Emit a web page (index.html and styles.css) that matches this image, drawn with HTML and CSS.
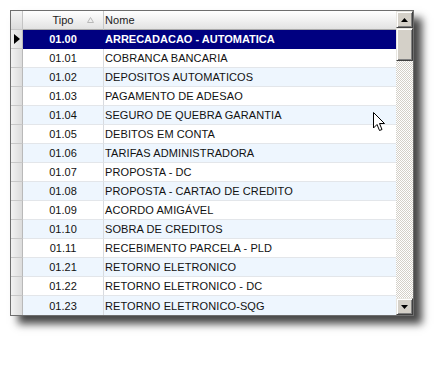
FILE: index.html
```html
<!DOCTYPE html>
<html lang="pt">
<head>
<meta charset="utf-8">
<title>Tipos</title>
<link rel="stylesheet" href="styles.css">
</head>
<body>
<div class="page">
  <div class="grid">
    <div class="table">
      <div class="row head">
        <div class="ind"></div>
        <div class="c-tipo">Tipo<span class="sort"><svg width="7" height="6" viewBox="0 0 7 6"><path d="M3.5 0.5 L6.5 5.5 L0.5 5.5 Z" fill="none" stroke="#b8b8b8" stroke-width="1"/></svg></span></div>
        <div class="c-nome">Nome</div>
      </div>
      <div class="row sel">
        <div class="ind"><svg width="6" height="10" viewBox="0 0 6 10"><path d="M0 0 L6 5 L0 10 Z" fill="#000"/></svg></div>
        <div class="c-tipo">01.00</div><div class="c-nome">ARRECADACAO - AUTOMATICA</div>
      </div>
      <div class="row odd"><div class="ind"></div><div class="c-tipo">01.01</div><div class="c-nome">COBRANCA BANCARIA</div></div>
      <div class="row even"><div class="ind"></div><div class="c-tipo">01.02</div><div class="c-nome">DEPOSITOS AUTOMATICOS</div></div>
      <div class="row odd"><div class="ind"></div><div class="c-tipo">01.03</div><div class="c-nome">PAGAMENTO DE ADESAO</div></div>
      <div class="row even"><div class="ind"></div><div class="c-tipo">01.04</div><div class="c-nome">SEGURO DE QUEBRA GARANTIA</div></div>
      <div class="row odd"><div class="ind"></div><div class="c-tipo">01.05</div><div class="c-nome">DEBITOS EM CONTA</div></div>
      <div class="row even"><div class="ind"></div><div class="c-tipo">01.06</div><div class="c-nome">TARIFAS ADMINISTRADORA</div></div>
      <div class="row odd"><div class="ind"></div><div class="c-tipo">01.07</div><div class="c-nome">PROPOSTA - DC</div></div>
      <div class="row even"><div class="ind"></div><div class="c-tipo">01.08</div><div class="c-nome">PROPOSTA - CARTAO DE CREDITO</div></div>
      <div class="row odd"><div class="ind"></div><div class="c-tipo">01.09</div><div class="c-nome">ACORDO AMIGÁVEL</div></div>
      <div class="row even"><div class="ind"></div><div class="c-tipo">01.10</div><div class="c-nome">SOBRA DE CREDITOS</div></div>
      <div class="row odd"><div class="ind"></div><div class="c-tipo">01.11</div><div class="c-nome">RECEBIMENTO PARCELA - PLD</div></div>
      <div class="row even"><div class="ind"></div><div class="c-tipo">01.21</div><div class="c-nome">RETORNO ELETRONICO</div></div>
      <div class="row odd"><div class="ind"></div><div class="c-tipo">01.22</div><div class="c-nome">RETORNO ELETRONICO - DC</div></div>
      <div class="row even last"><div class="ind"></div><div class="c-tipo">01.23</div><div class="c-nome">RETORNO ELETRONICO-SQG</div></div>
    </div>
    <div class="scrollbar">
      <div class="btn"><svg width="7" height="4" viewBox="0 0 7 4"><path d="M3.5 0 L7 4 L0 4 Z" fill="#000"/></svg></div>
      <div class="thumb"></div>
      <div class="track"></div>
      <div class="btn"><svg width="7" height="4" viewBox="0 0 7 4"><path d="M0 0 L7 0 L3.5 4 Z" fill="#000"/></svg></div>
    </div>
  </div>
  <svg class="cursor" width="13" height="20" viewBox="0 0 13 20"><path d="M0.5 0.5 L0.5 16 L4 12.5 L6.5 18.5 L9 17.5 L6.5 11.5 L11.5 11.5 Z" fill="#fff" stroke="#000" stroke-width="1" stroke-linejoin="miter"/></svg>
</div>
</body>
</html>
```
FILE: styles.css
```css
* { box-sizing: border-box; }
html, body { margin: 0; padding: 0; background: #fff; }
body { font-family: "Liberation Sans", Arial, sans-serif; font-size: 11px; color: #111; }
.page { position: relative; width: 435px; height: 367px; padding: 10px; }
.grid {
  display: flex;
  width: 404px;
  height: 306px;
  border: 1px solid #6e6e6e;
  background: #fff;
  box-shadow: 8px 8px 8px rgba(0,0,0,0.72);
}
.table { flex: 1; display: flex; flex-direction: column; overflow: hidden; }
.row {
  display: grid;
  grid-template-columns: 12px 81px 1fr;
  height: 19px;
  flex: none;
}
.row > div {
  border-bottom: 1px solid #e3e6ea;
  display: flex;
  align-items: center;
  white-space: nowrap;
  overflow: hidden;
}
.ind {
  border-right: 1px solid #b9b9b9;
  background: linear-gradient(to right, #f2f2f2, #dcdcdc);
  justify-content: center;
  border-bottom-color: #c8c8c8 !important;
}
.c-tipo { justify-content: center; border-right: 1px solid #d8dbe0; }
.c-nome { padding-left: 1px; letter-spacing: 0.1px; }
.head > div {
  background: linear-gradient(to bottom, #ffffff 0%, #f1f1f1 50%, #e2e2e2 100%);
  border-bottom: 1px solid #a8a8a8;
  color: #222;
}
.head .ind { background: linear-gradient(to bottom, #f4f4f4, #dcdcdc); border-right-color: #c4c4c4; }
.head .c-tipo { position: relative; border-right: 1px solid #c8c8c8; }
.head .sort { position: absolute; left: 64px; top: 6px; display: flex; }
.odd .c-tipo, .odd .c-nome { background: #fff; }
.even .c-tipo, .even .c-nome { background: #eef6fe; }
.sel .c-tipo, .sel .c-nome { background: #000080; color: #fff; font-weight: bold; border-bottom-color: #000080; border-right-color: #000080; }
.sel .c-nome { letter-spacing: 0; }
.last > div { border-bottom: none; }

.scrollbar {
  width: 17px;
  display: flex;
  flex-direction: column;
  background: repeating-conic-gradient(#d4d0c8 0 25%, #ffffff 0 50%) 0 0 / 2px 2px;
}
.btn, .thumb {
  background: #d4d0c8;
  border: 1px solid;
  border-color: #e8e6e0 #404040 #404040 #e8e6e0;
  box-shadow: inset 1px 1px 0 #ffffff, inset -1px -1px 0 #808080;
  flex: none;
}
.btn { height: 17px; display: flex; align-items: center; justify-content: center; }
.thumb { height: 33px; }
.track { flex: 1; }
.cursor { position: absolute; left: 373px; top: 112px; }
```
